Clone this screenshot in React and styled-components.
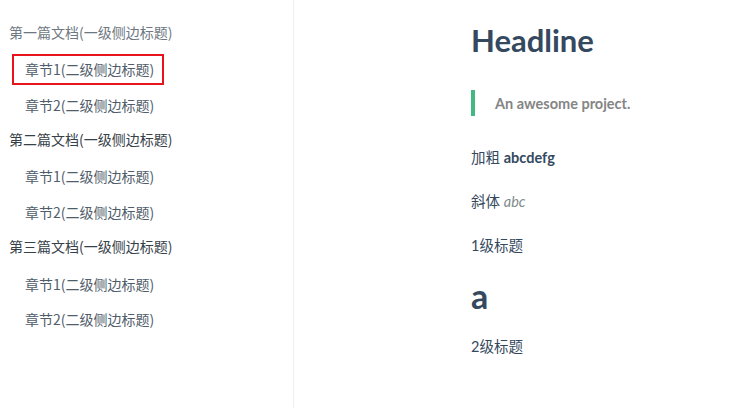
import React from "react";
import styled, { createGlobalStyle } from "styled-components";

const Global = createGlobalStyle`
  html, body { margin: 0; padding: 0; background: #fff; }
  body { font-family: Lato, "Noto Sans CJK SC", sans-serif; -webkit-font-smoothing: antialiased; }
`;

const Page = styled.div`
  display: flex;
  width: 737px;
  height: 408px;
  overflow: hidden;
`;

const Sidebar = styled.nav`
  width: 293px;
  flex-shrink: 0;
  border-right: 1px solid #eee;
  padding-top: 14px;
  box-sizing: content-box;
  font-family: "Noto Sans CJK SC", "Noto Sans", sans-serif;
  font-size: 14px;
`;

const List = styled.ul`
  list-style: none;
  margin: 0;
  padding: 0;
`;

const Item = styled.li`
  height: 35.75px;
  display: flex;
  align-items: center;
  padding-left: ${(p) => (p.$sub ? "14px" : "9px")};
  color: ${(p) => (p.$sub ? "#505d6b" : p.$muted ? "#6e7882" : "#364149")};
`;

const Link = styled.span`
  display: inline-flex;
  align-items: center;
  height: 27px;
  padding: 0 8px 0 11px;
  margin-top: 3px;
  border: 2px solid ${(p) => (p.$active ? "#e8141c" : "transparent")};
  line-height: 1;
  margin-left: -2px;
`;

const Main = styled.main`
  flex: 1;
  padding: 20px 0 0 177px;
  color: #34495e;
`;

const Headline = styled.h1`
  margin: 0;
  font-family: Lato, sans-serif;
  font-size: 31px;
  font-weight: 700;
  line-height: 40px;
  color: #34495e;
`;

const Quote = styled.blockquote`
  margin: 30px 0 0 0;
  border-left: 4px solid #42b983;
  padding: 0 0 0 20px;
  height: 26px;
  display: flex;
  align-items: center;
  color: #858585;
  font-family: Lato, sans-serif;
  font-weight: 700;
  font-size: 14.5px;
`;

const Para = styled.p`
  margin: ${(p) => p.$top || "20px"} 0 0 0;
  font-size: 14.5px;
  line-height: 24px;
  color: #34495e;
  font-family: Lato, "Noto Sans CJK SC", sans-serif;
`;

const Bold = styled.strong`
  font-weight: 700;
`;

const Em = styled.em`
  color: #7f8c8d;
`;

const SubHead = styled.h2`
  margin: 18px 0 0 0;
  font-family: Lato, sans-serif;
  font-size: 34px;
  font-weight: 700;
  line-height: 40px;
  color: #34495e;
`;

const docs = ["第一篇文档", "第二篇文档", "第三篇文档"];

export default function App() {
  return (
    <>
      <Global />
      <Page lang="zh-CN">
        <Sidebar>
          <List>
            {docs.map((d, i) => (
              <React.Fragment key={d}>
                <Item $muted={i === 0}>{d}(一级侧边标题)</Item>
                <Item $sub>
                  <Link $active={i === 0}>章节1(二级侧边标题)</Link>
                </Item>
                <Item $sub>
                  <Link>章节2(二级侧边标题)</Link>
                </Item>
              </React.Fragment>
            ))}
          </List>
        </Sidebar>
        <Main>
          <Headline>Headline</Headline>
          <Quote>An awesome project.</Quote>
          <Para $top="30px">
            加粗 <Bold>abcdefg</Bold>
          </Para>
          <Para>
            斜体 <Em>abc</Em>
          </Para>
          <Para>1级标题</Para>
          <SubHead>a</SubHead>
          <Para $top="19px">2级标题</Para>
        </Main>
      </Page>
    </>
  );
}
